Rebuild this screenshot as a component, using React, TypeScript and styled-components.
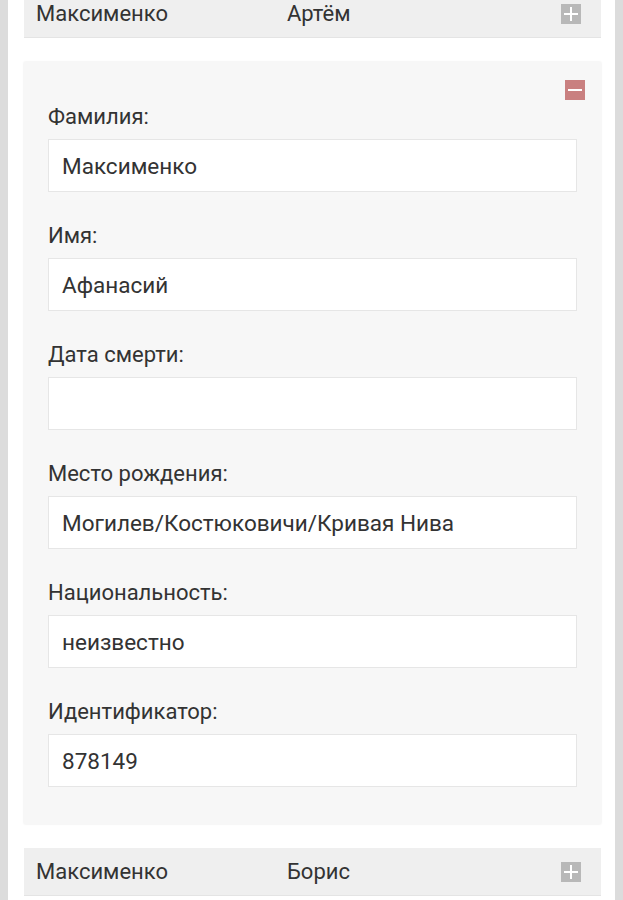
import React from "react";
import styled, { createGlobalStyle } from "styled-components";

const Global = createGlobalStyle`
  html, body { margin: 0; padding: 0; }
  body {
    background: #dcdcdc;
    font-family: Roboto, "Noto Sans", sans-serif;
    color: #333;
    overflow: hidden;
  }
`;

const Page = styled.div`
  margin: -10px 8px 0 8px;
  width: 607px;
  min-height: 920px;
  background: #fff;
  padding: 0 14px 0 16px;
  box-sizing: border-box;
  display: flex;
  flex-direction: column;
  gap: 24px;
`;

const Header = styled.div`
  height: 48px;
  box-sizing: border-box;
  background: #efefef;
  border-bottom: 1px solid #e4e4e4;
  display: grid;
  grid-template-columns: 251px 1fr auto;
  align-items: center;
  padding: 0 20px 0 12px;
  font-size: 22px;
`;

const Cell = styled.span`
  white-space: nowrap;
`;

const ToggleBtn = styled.span<{ $open?: boolean }>`
  width: 20px;
  height: 20px;
  display: flex;
  align-items: center;
  justify-content: center;
  background: ${(p) => (p.$open ? "#c98080" : "#b8b8b8")};
`;

const Card = styled.div`
  background: #f7f7f7;
  box-shadow: 0 0 2px rgba(0, 0, 0, 0.1);
  padding: 18px 16px 37px 24px;
  display: flex;
  flex-direction: column;
`;

const CardTop = styled.div`
  display: flex;
  justify-content: flex-end;
  margin-bottom: 5px;
`;

const Fields = styled.div`
  display: flex;
  flex-direction: column;
  gap: 32px;
  padding-right: 8px;
`;

const Field = styled.div`
  display: flex;
  flex-direction: column;
  gap: 10px;
`;

const Label = styled.div`
  font-size: 22px;
  line-height: 24px;
`;

const Input = styled.div`
  height: 53px;
  box-sizing: border-box;
  background: #fff;
  border: 1px solid #e6e6e6;
  padding: 0 13px;
  display: flex;
  align-items: center;
  font-size: 22.5px;
`;

const Plus = () => (
  <svg width="14" height="14" viewBox="0 0 14 14">
    <path d="M7 0V14M0 7H14" stroke="#fff" strokeWidth="2" />
  </svg>
);

const Minus = () => (
  <svg width="14" height="14" viewBox="0 0 14 14">
    <path d="M0 7H14" stroke="#fff" strokeWidth="2" />
  </svg>
);

const fields = [
  ["Фамилия:", "Максименко"],
  ["Имя:", "Афанасий"],
  ["Дата смерти:", ""],
  ["Место рождения:", "Могилев/Костюковичи/Кривая Нива"],
  ["Национальность:", "неизвестно"],
  ["Идентификатор:", "878149"],
];

export default function App() {
  return (
    <>
      <Global />
      <Page>
        <Header>
          <Cell>Максименко</Cell>
          <Cell>Артём</Cell>
          <ToggleBtn>
            <Plus />
          </ToggleBtn>
        </Header>
        <Card>
          <CardTop>
            <ToggleBtn $open>
              <Minus />
            </ToggleBtn>
          </CardTop>
          <Fields>
            {fields.map(([l, v]) => (
              <Field key={l}>
                <Label>{l}</Label>
                <Input>{v}</Input>
              </Field>
            ))}
          </Fields>
        </Card>
        <Header>
          <Cell>Максименко</Cell>
          <Cell>Борис</Cell>
          <ToggleBtn>
            <Plus />
          </ToggleBtn>
        </Header>
      </Page>
    </>
  );
}
